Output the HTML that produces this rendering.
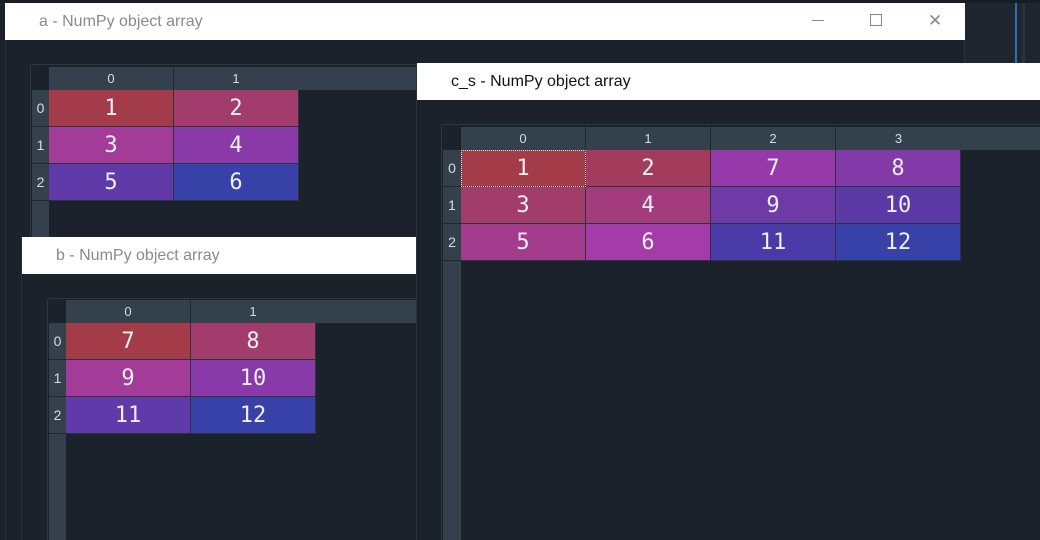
<!DOCTYPE html>
<html><head><style>
*{margin:0;padding:0;box-sizing:border-box}
html,body{width:1040px;height:540px;overflow:hidden}
body{background:#1b222c;position:relative;font-family:"Liberation Sans",sans-serif}
.a{position:absolute}
.title{background:#fff;font-size:16px;color:#8a8a8a;line-height:37px;height:37px}
.hdr{background:#34414c}
.hc{position:absolute;top:0;height:23px;line-height:23px;text-align:center;color:#d4dce4;font-size:13px;border-right:1px solid #1f2730}
.hc.l{border-right:none}
.rh{position:absolute;left:0;width:17px;text-align:center;color:#d4dce4;font-size:14px;background:#34414c;border-bottom:1px solid #1f2730}
.c{position:absolute;height:37px;line-height:37px;text-align:center;color:#eeeef4;font-family:"DejaVu Sans Mono",monospace;font-size:22px;border-right:1px solid #2a3340;border-bottom:1px solid #2a3340}
</style></head><body>
<div class="a" style="left:965px;top:0;width:75px;height:540px;background:#1f262f"></div>
<div class="a" style="left:1015px;top:0;width:2px;height:63px;background:#2f6fb0"></div>
<div class="a" style="left:1022px;top:0;width:3px;height:63px;background:#2a333d"></div>
<div class="a" style="left:0;top:0;width:1040px;height:3px;background:#181e26"></div>

<div class="a" style="left:5px;top:3px;width:960px;height:537px;background:#1b222c;border-left:1px solid #2a323c;border-right:1px solid #2a323c"></div>
<div class="a title" style="left:5px;top:3px;width:960px;padding-left:34px">a - NumPy object array</div>
<div class="a" style="left:812px;top:20px;width:12px;height:1px;background:#888"></div>
<div class="a" style="left:870px;top:14px;width:12px;height:12px;border:1px solid #888"></div>
<div class="a" style="left:928px;top:14px;font-size:17px;color:#888;line-height:14px">✕</div>

<div class="a" style="left:30px;top:64px;width:400px;height:476px;border:1px solid #2c3742;border-bottom:none;border-radius:3px 3px 0 0"></div>
<div class="a hdr" style="left:49px;top:67px;width:380px;height:23px">
<div class="hc" style="left:0;width:125px">0</div><div class="hc l" style="left:125px;width:124px">1</div></div>
<div class="a" style="left:32px;top:90px;width:17px;height:450px;background:#34414c"></div>
<div class="rh" style="top:90px;height:37px;line-height:37px;left:32px">0</div>
<div class="rh" style="top:127px;height:37px;line-height:37px;left:32px">1</div>
<div class="rh" style="top:164px;height:37px;line-height:37px;left:32px">2</div>
<div class="c" style="left:49px;top:90px;width:125px;background:#a33c48">1</div>
<div class="c" style="left:174px;top:90px;width:125px;background:#a23c6c">2</div>
<div class="c" style="left:49px;top:127px;width:125px;background:#a33c98">3</div>
<div class="c" style="left:174px;top:127px;width:125px;background:#8a3aa8">4</div>
<div class="c" style="left:49px;top:164px;width:125px;background:#5f3aa8">5</div>
<div class="c" style="left:174px;top:164px;width:125px;background:#3841a8">6</div>

<div class="a" style="left:21px;top:237px;width:400px;height:303px;background:#1b222c;border-left:1px solid #2a323c"></div>
<div class="a title" style="left:22px;top:237px;width:395px;padding-left:34px">b - NumPy object array</div>
<div class="a" style="left:47px;top:298px;width:380px;height:242px;border:1px solid #2c3742;border-bottom:none;border-radius:3px 3px 0 0"></div>
<div class="a hdr" style="left:66px;top:300px;width:351px;height:23px">
<div class="hc" style="left:0;width:125px">0</div><div class="hc l" style="left:125px;width:124px">1</div></div>
<div class="a" style="left:49px;top:323px;width:17px;height:217px;background:#34414c"></div>
<div class="rh" style="top:323px;height:37px;line-height:37px;left:49px">0</div>
<div class="rh" style="top:360px;height:37px;line-height:37px;left:49px">1</div>
<div class="rh" style="top:397px;height:37px;line-height:37px;left:49px">2</div>
<div class="c" style="left:66px;top:323px;width:125px;background:#a33c48">7</div>
<div class="c" style="left:191px;top:323px;width:125px;background:#a23c6c">8</div>
<div class="c" style="left:66px;top:360px;width:125px;background:#a33c98">9</div>
<div class="c" style="left:191px;top:360px;width:125px;background:#8a3aa8">10</div>
<div class="c" style="left:66px;top:397px;width:125px;background:#5f3aa8">11</div>
<div class="c" style="left:191px;top:397px;width:125px;background:#3841a8">12</div>

<div class="a" style="left:416px;top:63px;width:624px;height:477px;background:#1b222c;border-left:1px solid #2a323c"></div>
<div class="a title" style="left:417px;top:63px;width:623px;padding-left:34px;color:#111">c_s - NumPy object array</div>
<div class="a" style="left:441px;top:124px;width:620px;height:416px;border:1px solid #2c3742;border-bottom:none;border-radius:3px 3px 0 0"></div>
<div class="a hdr" style="left:461px;top:127px;width:579px;height:23px">
<div class="hc" style="left:0;width:125px">0</div><div class="hc" style="left:125px;width:125px">1</div><div class="hc" style="left:250px;width:125px">2</div><div class="hc l" style="left:375px;width:125px">3</div></div>
<div class="a" style="left:443px;top:150px;width:18px;height:390px;background:#34414c"></div>
<div class="rh" style="top:150px;height:37px;line-height:37px;left:443px;width:18px">0</div>
<div class="rh" style="top:187px;height:37px;line-height:37px;left:443px;width:18px">1</div>
<div class="rh" style="top:224px;height:37px;line-height:37px;left:443px;width:18px">2</div>
<div class="c" style="left:461px;top:150px;width:125px;background:#a33c48;outline:1px dotted #ddd;outline-offset:-1px">1</div>
<div class="c" style="left:586px;top:150px;width:125px;background:#a33c5c">2</div>
<div class="c" style="left:711px;top:150px;width:125px;background:#953aa8">7</div>
<div class="c" style="left:836px;top:150px;width:125px;background:#823aa8">8</div>
<div class="c" style="left:461px;top:187px;width:125px;background:#a23c68">3</div>
<div class="c" style="left:586px;top:187px;width:125px;background:#a33c7c">4</div>
<div class="c" style="left:711px;top:187px;width:125px;background:#6e3aa8">9</div>
<div class="c" style="left:836px;top:187px;width:125px;background:#5b3aa8">10</div>
<div class="c" style="left:461px;top:224px;width:125px;background:#a33c8c">5</div>
<div class="c" style="left:586px;top:224px;width:125px;background:#a33ca8">6</div>
<div class="c" style="left:711px;top:224px;width:125px;background:#4a3aa8">11</div>
<div class="c" style="left:836px;top:224px;width:125px;background:#3841a8">12</div>
</body></html>
